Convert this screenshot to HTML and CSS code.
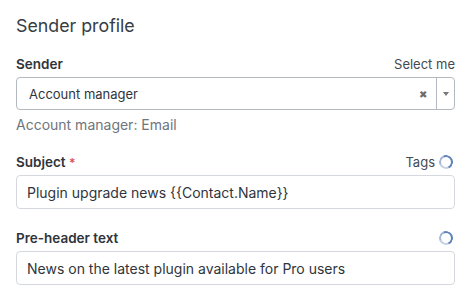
FILE: index.html
```html
<!DOCTYPE html>
<html lang="en">
<head>
    <meta charset="UTF-8">
    <title>Sender profile</title>
    <link rel="stylesheet" href="styles.css">
</head>
<body>
    <div class="panel">
        <h2 class="title">Sender profile</h2>

        <div class="field">
            <div class="field-head">
                <label class="label">Sender</label>
                <span class="aside">Select me</span>
            </div>
            <div class="select">
                <span class="select-value">Account manager</span>
                <span class="select-clear">&#x2716;</span>
                <span class="select-arrow"><span class="caret"></span></span>
            </div>
            <div class="hint">Account manager: Email</div>
        </div>

        <div class="field">
            <div class="field-head">
                <label class="label">Subject <span class="req">*</span></label>
                <span class="aside">Tags <span class="spinner"></span></span>
            </div>
            <input class="text-input" type="text" value="Plugin upgrade news {{Contact.Name}}">
        </div>

        <div class="field">
            <div class="field-head">
                <label class="label">Pre-header text</label>
                <span class="aside"><span class="spinner"></span></span>
            </div>
            <input class="text-input" type="text" value="News on the latest plugin available for Pro users">
        </div>
    </div>
</body>
</html>
```

FILE: styles.css
```css
body {
    font-family: 'Inter', 'Liberation Sans', sans-serif;
    background-color: #ffffff;
    color: #333840;
    margin: 0;
    padding: 0;
}
.panel {
    width: 439px;
    padding: 14px 0 0 16px;
}
.title {
    font-size: 17.8px;
    font-weight: 400;
    margin: 0 0 16px;
    line-height: 24px;
    color: #373c44;
}
.field {
    margin-bottom: 19px;
}
.field-head {
    display: flex;
    justify-content: space-between;
    align-items: center;
    height: 20px;
    margin-bottom: 3px;
}
.label {
    font-size: 13.5px;
    font-weight: 600;
    color: #2f343b;
}
.req {
    color: #d9534f;
    font-size: 12px;
}
.aside {
    font-size: 13px;
    color: #444a52;
    display: flex;
    align-items: center;
    gap: 4px;
}
.spinner {
    display: inline-block;
    width: 10px;
    height: 10px;
    border-radius: 50%;
    border: 2px solid #5f82b8;
    border-bottom-color: #c4d1e4;
    border-left-color: #a3b7d4;
    transform: rotate(20deg);
    margin-right: 2px;
}
.select {
    display: flex;
    align-items: center;
    height: 31px;
    border: 1px solid #b3b9c1;
    border-radius: 4px;
}
.select-value {
    flex: 1;
    padding-left: 12px;
    font-size: 13px;
    color: #30353c;
}
.select-clear {
    font-size: 10px;
    color: #6c6c6c;
    width: 26px;
    text-align: center;
}
.select-arrow {
    width: 17px;
    height: 31px;
    border-left: 1px solid #b3b9c1;
    display: flex;
    align-items: center;
    justify-content: center;
}
.caret {
    border-left: 3px solid transparent;
    border-right: 3px solid transparent;
    border-top: 4px solid #777;
}
.hint {
    font-size: 14px;
    color: #6f757c;
    margin: 6px 0 2px;
}
.text-input {
    display: block;
    width: 100%;
    height: 34px;
    box-sizing: border-box;
    border: 1px solid #d5d9de;
    border-radius: 4px;
    padding: 0 10px;
    font-family: inherit;
    font-size: 14px;
    color: #30353c;
}
```
